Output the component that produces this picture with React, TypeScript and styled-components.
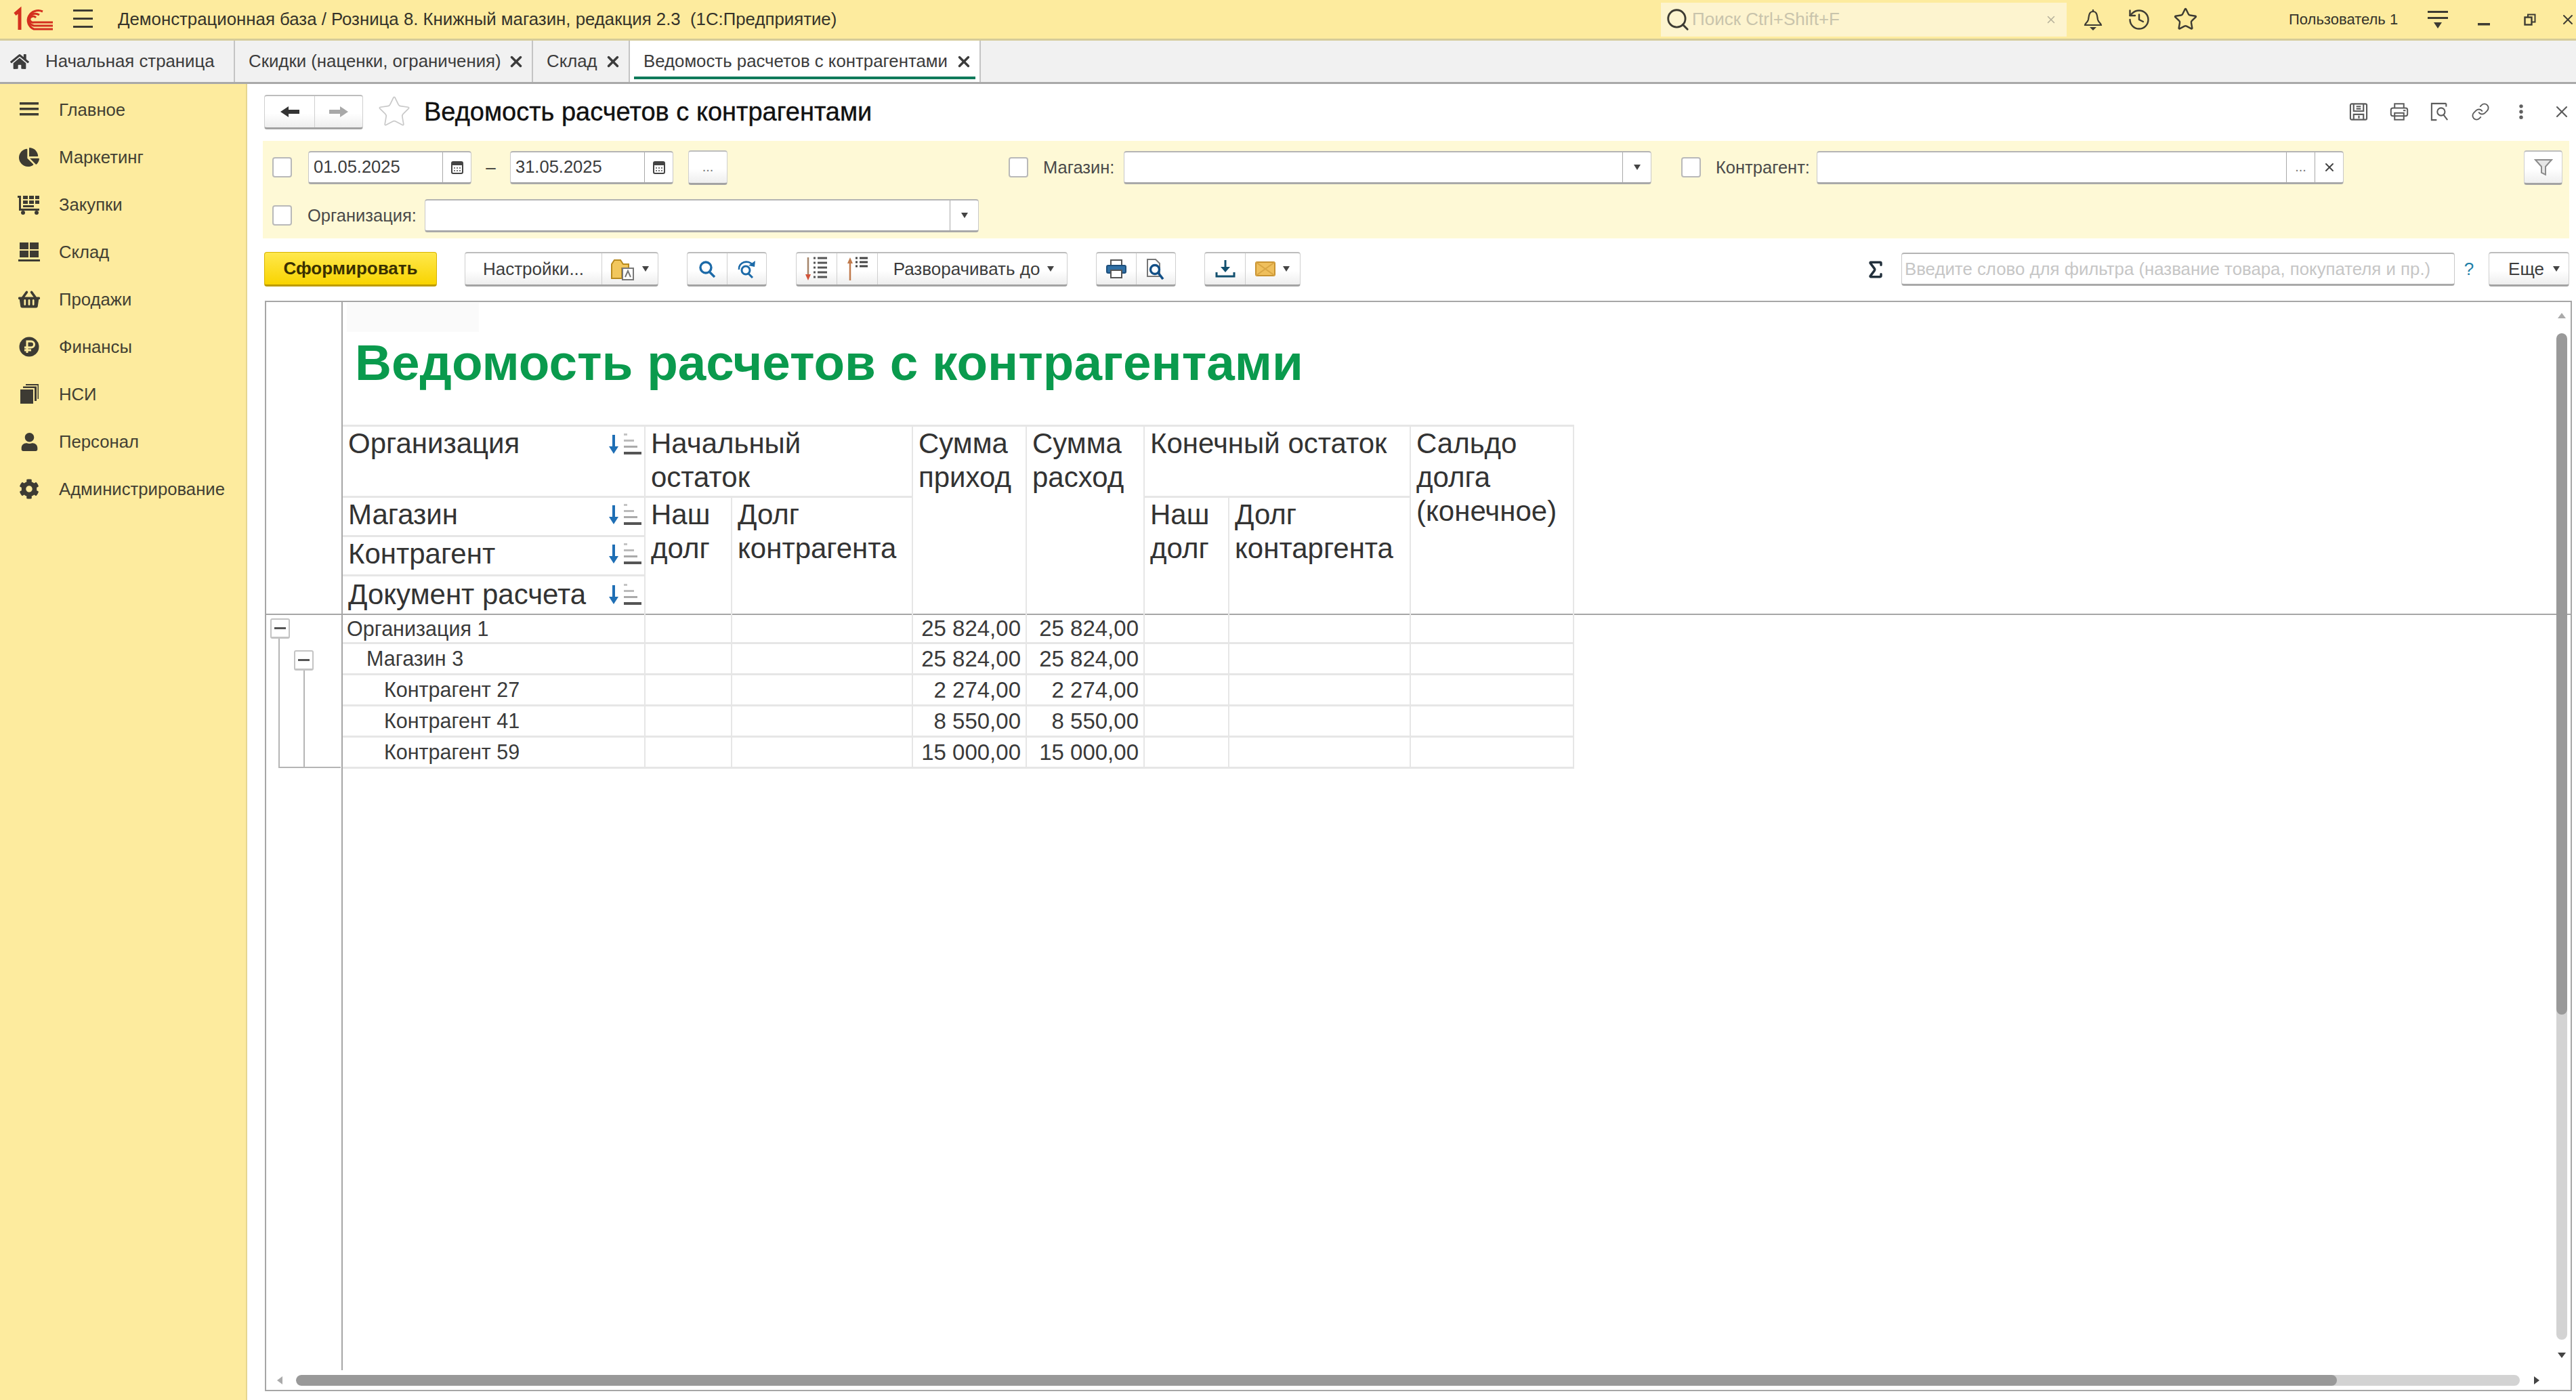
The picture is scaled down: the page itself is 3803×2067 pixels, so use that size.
import React from 'react';
import styled, { createGlobalStyle } from 'styled-components';
import { History, Star, Search, X, Link, EllipsisVertical, Sigma } from 'lucide-react';
import { FaChartPie, FaCog, FaHome, FaShoppingBasket, FaUser } from 'react-icons/fa';

const COLOR_YELLOW = '#fdeb9e';
const COLOR_PANEL = '#fef9d6';
const COLOR_TEXT = '#3a3a36';
const COLOR_ICON = '#3d3b33';
const COLOR_LINE = '#e6e6e6';
const COLOR_FRAME = '#a6a6a6';

const GlobalStyle = createGlobalStyle`
  html, body {
    margin: 0;
    padding: 0;
    background: #fff;
  }
  * {
    box-sizing: border-box;
  }
  body {
    font-family: "Liberation Sans", Arial, sans-serif;
    color: ${COLOR_TEXT};
  }
`;

const Page = styled.div`
  width: 3803px;
  height: 2067px;
  display: flex;
  flex-direction: column;
  overflow: hidden;
`;

/* top bar */
const TopBar = styled.header`
  height: 60px;
  flex: none;
  display: flex;
  align-items: center;
  background: ${COLOR_YELLOW};
  border-bottom: 3px solid #d5cb9a;
`;

const LogoSlot = styled.div`
  display: flex;
  margin-left: 20px;
  width: 88px;
`;

const MenuSlot = styled.div`
  display: flex;
  width: 66px;
`;

const AppTitle = styled.div`
  font-size: 25.8px;
  white-space: pre;
  color: #35332a;
`;

const SearchBox = styled.div`
  margin-left: auto;
  width: 599px;
  height: 50px;
  display: flex;
  align-items: center;
  padding: 0 14px 0 6px;
  background: #fdf4cf;
  font-size: 26px;
  color: #c9c4ac;
`;

const SearchText = styled.span`
  margin-left: 2px;
  flex: 1;
`;

const TopSlot = styled.div<{ $w?: number }>`
  width: ${(p) => p.$w ?? 68}px;
  flex: none;
  display: flex;
  justify-content: center;
  align-items: center;
  color: ${COLOR_ICON};
`;

const TopIcons = styled.div`
  display: flex;
  margin-left: 5px;
`;

const UserName = styled.div`
  width: 186px;
  margin-left: 119px;
  font-size: 22px;
  color: #35332a;
`;

const CloseSlot = styled.div`
  width: 34px;
  padding-left: 10px;
  flex: none;
  display: flex;
  color: ${COLOR_ICON};
`;

/* tabs */
const TabBar = styled.nav`
  height: 64px;
  flex: none;
  display: flex;
  background: #f1f1f1;
  border-bottom: 3px solid #a9a9a9;
`;

const Tab = styled.div<{ $w: number; $active?: boolean }>`
  position: relative;
  width: ${(p) => p.$w}px;
  flex: none;
  display: flex;
  align-items: center;
  justify-content: space-between;
  padding: 0 10px 0 20px;
  font-size: 25.8px;
  white-space: nowrap;
  color: #3c3c3c;
  background: ${(p) => (p.$active ? '#fff' : 'transparent')};
  border-right: 2px solid #c4c4c4;
  ${(p) =>
    p.$active &&
    `&::after {
      content: '';
      position: absolute;
      left: 6px;
      right: 6px;
      bottom: 4px;
      height: 4px;
      background: #0f7a5a;
    }`}
`;

const HomeTab = styled(Tab)`
  justify-content: flex-start;
  gap: 24px;
  padding-left: 15px;
`;

/* body */
const Body = styled.div`
  flex: 1;
  min-height: 0;
  display: flex;
`;

const Sidebar = styled.aside`
  width: 365px;
  flex: none;
  padding-top: 3px;
  background: ${COLOR_YELLOW};
  border-right: 2px solid #e5d690;
`;

const SideItem = styled.div`
  height: 70px;
  display: flex;
  align-items: center;
  font-size: 25.7px;
  color: #423f33;
`;

const SideIcon = styled.div`
  width: 87px;
  flex: none;
  padding-right: 1px;
  display: flex;
  justify-content: center;
  color: ${COLOR_ICON};
`;

const Main = styled.main`
  flex: 1;
  min-width: 0;
  display: flex;
  flex-direction: column;
  padding: 0 10px 13px 25px;
`;

const HeadRow = styled.div`
  height: 84px;
  flex: none;
  display: flex;
  align-items: center;
  padding-bottom: 2px;
`;

const Group = styled.div<{ $w?: number; $ml?: number }>`
  width: ${(p) => (p.$w ? `${p.$w}px` : 'auto')};
  margin-left: ${(p) => p.$ml ?? 0}px;
  height: 51px;
  flex: none;
  display: flex;
  background: linear-gradient(#fff 55%, #eeeeee);
  border: 1px solid #cfcfcf;
  border-top: 2px solid #bdbdbd;
  border-bottom: 3px solid #a3a3a3;
  border-radius: 4px;
`;

const GroupCell = styled.div<{ $w?: number; $pl?: number; $gap?: number }>`
  width: ${(p) => (p.$w ? `${p.$w}px` : 'auto')};
  flex: ${(p) => (p.$w ? 'none' : '1')};
  display: flex;
  align-items: center;
  justify-content: center;
  gap: ${(p) => p.$gap ?? 10}px;
  padding-left: ${(p) => p.$pl ?? 0}px;
  font-size: 26px;
  color: #3c3c3c;
  border-right: 1px solid #cfcfcf;
  &:last-child {
    border-right: 0;
  }
`;

const StarSlot = styled.div`
  margin-left: 20px;
  flex: none;
  display: flex;
  color: #c9c9c9;
`;

const PageTitle = styled.h1`
  margin: 0 0 0 18px;
  font-size: 38px;
  font-weight: 400;
  color: #111;
  -webkit-text-stroke: 0.4px #111;
  white-space: nowrap;
`;

const FormIcons = styled.div`
  margin-left: auto;
  margin-right: -3px;
  display: flex;
  gap: 32px;
  color: #5b5b5b;
`;

const FormIcon = styled.div`
  width: 28px;
  display: flex;
  justify-content: center;
  align-items: center;
`;

/* filter panel */
const FilterPanel = styled.section`
  height: 144px;
  flex: none;
  margin-left: -2px;
  padding: 13px 0 0 14px;
  background: ${COLOR_PANEL};
`;

const FilterRow = styled.div`
  height: 52px;
  display: flex;
  align-items: center;
  & + & {
    margin-top: 19px;
  }
`;

const Check = styled.div<{ $ml?: number }>`
  width: 29px;
  height: 30px;
  flex: none;
  margin-left: ${(p) => p.$ml ?? 0}px;
  background: #fff;
  border: 2px solid #b9b9b9;
  border-radius: 4px;
`;

const FieldLabel = styled.div<{ $w: number; $ml: number }>`
  width: ${(p) => p.$w}px;
  margin-left: ${(p) => p.$ml}px;
  flex: none;
  font-size: 25.5px;
  color: #4a4a4a;
  white-space: nowrap;
`;

const Field = styled.div<{ $w: number; $ml?: number }>`
  width: ${(p) => p.$w}px;
  margin-left: ${(p) => p.$ml ?? 0}px;
  height: 49px;
  flex: none;
  display: flex;
  background: #fff;
  border: 1px solid #c8c8c8;
  border-top: 2px solid #b4b4b4;
  border-bottom: 3px solid #a9a9a9;
  border-radius: 4px;
`;

const FieldValue = styled.div`
  flex: 1;
  padding-left: 7px;
  display: flex;
  align-items: center;
  font-size: 25.5px;
  color: #3c3c3c;
`;

const FieldAddon = styled.div<{ $w?: number }>`
  width: ${(p) => p.$w ?? 42}px;
  flex: none;
  display: flex;
  align-items: center;
  justify-content: center;
  font-size: 20px;
  color: #777;
  border-left: 1px solid #a9a9a9;
`;

const DateDash = styled.div`
  width: 57px;
  flex: none;
  text-align: center;
  font-size: 26px;
`;

const PanelButton = styled(Group)`
  font-size: 20px;
  color: #777;
  align-items: center;
  justify-content: center;
`;

const FilterButton = styled(PanelButton)`
  margin-left: auto;
  margin-right: 10px;
`;

/* report command bar */
const Toolbar = styled.div`
  height: 51px;
  flex: none;
  margin-top: 20px;
  display: flex;
  align-items: center;
`;

const GenerateButton = styled.div`
  width: 255px;
  height: 51px;
  flex: none;
  display: flex;
  align-items: center;
  justify-content: center;
  font-size: 26px;
  font-weight: 700;
  color: #3a3000;
  background: linear-gradient(#ffe84d, #f9d400);
  border: 1px solid #d8b400;
  border-bottom: 3px solid #bd9c00;
  border-radius: 4px;
`;

const SumSlot = styled.div`
  margin-left: auto;
  width: 38px;
  display: flex;
  justify-content: center;
  color: #22303c;
`;

const QuickFilter = styled(Field)`
  height: 49px;
  padding-left: 4px;
  align-items: center;
  font-size: 25.8px;
  color: #c6c6c6;
  white-space: nowrap;
`;

const HelpMark = styled.div`
  width: 50px;
  flex: none;
  padding-right: 8px;
  text-align: center;
  font-size: 26px;
  color: #1e7fa8;
`;

/* report */
const Report = styled.section`
  position: relative;
  flex: 1;
  min-height: 0;
  margin: 21px -4px 0 1px;
  display: grid;
  grid-template-columns: 113px 1fr;
  grid-template-rows: 462px 1fr 29px;
  border: 2px solid ${COLOR_FRAME};
`;

const HeadGutter = styled.div`
  border-right: 2px solid ${COLOR_FRAME};
  border-bottom: 2px solid ${COLOR_FRAME};
`;

const HeadPane = styled.div`
  border-bottom: 2px solid ${COLOR_FRAME};
`;

const EmptyCell = styled.div`
  width: 195px;
  height: 43px;
  margin: 1px 0 0 6px;
  background: #fafafa;
`;

const ReportTitle = styled.div`
  height: 80px;
  margin: 5px 0 52px 18px;
  line-height: 80px;
  font-size: 74.7px;
  font-weight: 700;
  color: #0a9a4d;
  white-space: nowrap;
`;

const GRID_COLUMNS = '447px 128px 267px 168px 174px 125px 268px 241px';

const HeadGrid = styled.div`
  width: 1818px;
  height: 279px;
  display: grid;
  grid-template-columns: ${GRID_COLUMNS};
  grid-template-rows: 105px 58px 58px 58px;
  border-top: 3px solid ${COLOR_LINE};
`;

const HeadCell = styled.div<{ $cols?: number; $rows?: number; $tail?: boolean }>`
  grid-column: span ${(p) => p.$cols ?? 1};
  grid-row: span ${(p) => p.$rows ?? 1};
  padding: 0 0 0 8px;
  font-size: 42px;
  line-height: 50px;
  color: #333;
  border-right: 2px solid ${COLOR_LINE};
  border-bottom: ${(p) => (p.$tail ? '0' : `3px solid ${COLOR_LINE}`)};
  white-space: pre-line;
`;

const KeyCell = styled.div<{ $top?: boolean; $last?: boolean }>`
  display: flex;
  align-items: ${(p) => (p.$top ? 'flex-start' : 'center')};
  justify-content: space-between;
  padding: ${(p) => (p.$top ? '0 3px 0 8px' : '0 3px 5px 8px')};
  font-size: 42px;
  line-height: 50px;
  color: #333;
  white-space: nowrap;
  border-right: 2px solid ${COLOR_LINE};
  border-bottom: ${(p) => (p.$last ? '0' : `3px solid ${COLOR_LINE}`)};
`;

const SortMark = styled.svg<{ $top?: boolean }>`
  flex: none;
  margin-top: ${(p) => (p.$top ? '10px' : '0')};
`;

const Gutter = styled.div`
  display: flex;
  flex-direction: column;
  padding-top: 5px;
  border-right: 2px solid ${COLOR_FRAME};
`;

const Toggle = styled.div`
  width: 29px;
  height: 30px;
  flex: none;
  display: flex;
  align-items: center;
  justify-content: center;
  background: #fff;
  border: 2px solid #c4c4c4;
  border-bottom-width: 3px;
  border-radius: 3px;
  &::before {
    content: '';
    width: 17px;
    height: 3px;
    background: #555;
  }
`;

const RootToggle = styled(Toggle)`
  margin-left: 6px;
`;

const Branch = styled.div`
  width: 92px;
  height: 191px;
  margin-left: 18px;
  padding: 17px 0 0 21px;
  display: flex;
  flex-direction: column;
  border-left: 2px solid #b5b5b5;
  border-bottom: 2px solid #b5b5b5;
`;

const BranchLine = styled.div`
  flex: 1;
  width: 2px;
  margin-left: 14px;
  background: #b5b5b5;
`;

const DataGrid = styled.div`
  width: 1818px;
  align-self: start;
  display: grid;
  grid-template-columns: ${GRID_COLUMNS};
  grid-auto-rows: 46px;
  grid-template-rows: 43px;
`;

const DataCell = styled.div<{ $indent?: number; $num?: boolean }>`
  display: flex;
  align-items: center;
  justify-content: ${(p) => (p.$num ? 'flex-end' : 'flex-start')};
  padding: ${(p) => (p.$num ? '0 7px 0 0' : `0 0 0 ${p.$indent ?? 0}px`)};
  font-size: ${(p) => (p.$num ? 33 : 30.5)}px;
  color: #3a3a3a;
  white-space: nowrap;
  border-right: 2px solid ${COLOR_LINE};
  border-bottom: 3px solid ${COLOR_LINE};
`;

const HScroll = styled.div`
  grid-column: 1 / 3;
  display: flex;
  align-items: center;
  padding: 0 44px 0 14px;
`;

const ScrollArrow = styled.svg`
  flex: none;
`;

const ScrollTrack = styled.div`
  flex: 1;
  height: 16px;
  margin: 0 19px 0 18px;
  background: #d3d3d3;
  border-radius: 8px;
  overflow: hidden;
`;

const ScrollThumb = styled.div`
  height: 100%;
  background: #999;
  border-radius: 8px;
`;

const VScroll = styled.div`
  position: absolute;
  top: 14px;
  right: 5px;
  bottom: 45px;
  width: 16px;
  display: flex;
  flex-direction: column;
  align-items: center;
`;

const VTrack = styled.div`
  flex: 1;
  width: 16px;
  margin: 20px 0 17px;
  background: #d3d3d3;
  border-radius: 8px;
  overflow: hidden;
`;

const VThumb = styled.div`
  width: 100%;
  background: #999;
  border-radius: 8px;
`;

/* drawings */
const Logo = () => (
  <svg width="60" height="44" viewBox="0 0 60 44" fill="none" stroke="#d4301f" strokeWidth="3">
    <path d="M2 14 L9 8 V37" strokeWidth="5" />
    <path d="M43 10 A15 14 0 1 0 30 36 H58" />
    <path d="M38 15 A10 9 0 1 0 30 31 H58" />
    <path d="M33 19 A5 4.5 0 1 0 30 26 H58" />
  </svg>
);

const Lines = ({ w = 36, h = 36, gap = 11, bar = 3 }: { w?: number; h?: number; gap?: number; bar?: number }) => (
  <svg width={w} height={h} viewBox={`0 0 ${w} ${h}`} fill="#3d3b33">
    {[0, 1, 2].map((i) => (
      <rect key={i} x="0" y={3 + i * gap} width={w} height={bar} />
    ))}
  </svg>
);

const MenuDown = () => (
  <svg width="30" height="28" viewBox="0 0 30 28" fill="#3d3b33">
    <rect y="1" width="30" height="3" />
    <rect y="10" width="30" height="3" />
    <path d="M9 18 H21 L15 27 Z" />
  </svg>
);

const Restore = () => (
  <svg width="18" height="18" viewBox="0 0 18 18" fill="none" stroke="#3d3b33" strokeWidth="2.4">
    <rect x="1.5" y="5.5" width="10" height="11" />
    <path d="M6 5 V1.5 H16.5 V12.5 H12" strokeWidth="2" />
  </svg>
);

const Minimize = () => (
  <svg width="20" height="20" viewBox="0 0 20 20" fill="#3d3b33">
    <rect x="1" y="15" width="18" height="3.5" />
  </svg>
);

const BellDown = () => (
  <svg width="30" height="32" viewBox="0 0 30 32" fill="none" stroke="#3d3b33" strokeWidth="2.2">
    <path d="M15 1 V4 M15 4 C9 4 9 10 8 16 C7 20 3 22 3 24 H27 C27 22 23 20 22 16 C21 10 21 4 15 4 Z" />
    <path d="M10 27 H20 L15 32 Z" fill="#3d3b33" stroke="none" />
  </svg>
);

const PieIcon = () => <FaChartPie size={30} />;

const CartIcon = () => (
  <svg width="34" height="30" viewBox="0 0 34 30" fill="#3d3b33">
    <path d="M0 2 H5 V21 H32 V24 H2 V5 H0 Z" />
    <rect x="8" y="2" width="7" height="5" />
    <rect x="17" y="2" width="7" height="5" />
    <rect x="26" y="2" width="6" height="5" />
    <rect x="8" y="9" width="7" height="5" />
    <rect x="17" y="9" width="7" height="5" />
    <rect x="26" y="9" width="6" height="5" />
    <rect x="8" y="16" width="16" height="3" />
    <circle cx="8" cy="27" r="3" />
    <circle cx="28" cy="27" r="3" />
  </svg>
);

const WarehouseIcon = () => (
  <svg width="32" height="30" viewBox="0 0 32 30" fill="#3d3b33">
    <rect x="2" y="1" width="13" height="10" />
    <rect x="17" y="1" width="13" height="10" />
    <rect x="2" y="13" width="13" height="10" />
    <rect x="17" y="13" width="13" height="10" />
    <rect x="0" y="26" width="32" height="3" />
  </svg>
);

const RubleIcon = () => (
  <svg width="30" height="30" viewBox="0 0 30 30">
    <circle cx="15" cy="15" r="14.5" fill="#3d3b33" />
    <path d="M12 24 V7 H18 A4.5 4.5 0 0 1 18 16 H8 M8 20 H18" fill="none" stroke={COLOR_YELLOW} strokeWidth="3" />
  </svg>
);

const StackIcon = () => (
  <svg width="28" height="30" viewBox="0 0 28 30" fill="#3d3b33">
    <rect x="1" y="8" width="19" height="21" />
    <path d="M5 6 V3.5 H25 V25 H22 V6 Z" />
    <path d="M9 2 V0 H28 V22 H26.5 V2 Z" />
  </svg>
);

const SortGlyph = ({ top }: { top?: boolean }) => (
  <SortMark $top={top} width="50" height="32" viewBox="0 0 50 32">
    <path d="M6 2 H10 V19 H15 L8 30 L1 19 H6 Z" fill="#1f6fb5" />
    <rect x="23" y="0" width="5" height="3" fill="#c4c4c4" />
    <rect x="23" y="9" width="15" height="3" fill="#bbb" />
    <rect x="23" y="18" width="20" height="3" fill="#aaa" />
    <rect x="23" y="27" width="26" height="4" fill="#555" />
  </SortMark>
);

const Calendar = () => (
  <svg width="18" height="20" viewBox="0 0 18 20">
    <rect x="1" y="2" width="16" height="17" rx="2" fill="#fff" stroke="#444" strokeWidth="2" />
    <rect x="1" y="2" width="16" height="5" fill="#444" />
    <path d="M4 11 H14 M4 15 H14" stroke="#777" strokeWidth="2" strokeDasharray="2 2" />
  </svg>
);

const Caret = () => (
  <svg width="12" height="10" viewBox="0 0 12 10">
    <path d="M1 1 H11 L6 9 Z" fill="#444" />
  </svg>
);

const NavArrow = ({ dir, color }: { dir: 'left' | 'right'; color: string }) => (
  <svg width="30" height="18" viewBox="0 0 30 18" style={dir === 'right' ? { transform: 'scaleX(-1)' } : undefined}>
    <path d="M1 9 L13 1 V6 H29 V12 H13 V17 Z" fill={color} />
  </svg>
);

const Funnel = () => (
  <svg width="28" height="26" viewBox="0 0 28 26" fill="#e6e6e6" stroke="#8c8c8c" strokeWidth="2">
    <path d="M2 2 H26 L17 12 V24 L11 21 V12 Z" />
  </svg>
);

const FolderDoc = () => (
  <svg width="36" height="33" viewBox="0 0 36 33">
    <path d="M2 9 L6 3 H15 L19 9 H27 V15 H17 V30 H2 Z" fill="#f2c75c" stroke="#b88a1e" strokeWidth="2" />
    <rect x="18" y="15" width="16" height="17" fill="#fff" stroke="#777" strokeWidth="2" />
    <path d="M22 28 L26 19 L30 28" fill="none" stroke="#777" strokeWidth="2" />
  </svg>
);

const Magnifier = () => (
  <svg width="26" height="25" viewBox="0 0 26 25" fill="none" stroke="#1c6aa8" strokeWidth="3.4">
    <circle cx="11" cy="10" r="8" />
    <path d="M16 16 L24 24" />
  </svg>
);

const MagnifierCycle = () => (
  <svg width="28" height="27" viewBox="0 0 28 27" fill="none" stroke="#1c6aa8" strokeWidth="2.6">
    <path d="M3 14 A11 10 0 0 1 23 7" />
    <path d="M27 1 L26 10 L17 8 Z" fill="#1c6aa8" stroke="none" />
    <circle cx="13" cy="15" r="6" strokeWidth="3" />
    <path d="M17 20 L23 26" strokeWidth="3" />
  </svg>
);

const ListDown = () => (
  <svg width="34" height="36" viewBox="0 0 34 36">
    <path d="M4 1 V28" stroke="#a5856a" strokeWidth="2.5" />
    <path d="M0 26 H8 L4 35 Z" fill="#d2543a" />
    {[2, 9, 16, 23, 30].map((y) => (
      <path key={y} d="M12 0 H15 M18 0 H32" transform={`translate(0 ${y})`} stroke="#555" strokeWidth="3" />
    ))}
  </svg>
);

const ListUp = () => (
  <svg width="30" height="36" viewBox="0 0 30 36">
    <path d="M4 8 V35" stroke="#c07a4c" strokeWidth="2.5" />
    <path d="M0 10 H8 L4 1 Z" fill="#c07a4c" />
    {[2, 8, 14].map((y) => (
      <path key={y} d="M12 0 H15 M18 0 H30" transform={`translate(0 ${y})`} stroke="#444" strokeWidth="3" />
    ))}
  </svg>
);

const PrintBlue = () => (
  <svg width="30" height="28" viewBox="0 0 30 28" fill="none" stroke="#555" strokeWidth="2">
    <path d="M7 9 V1 H23 V9" />
    <rect x="1" y="9" width="28" height="11" rx="2" fill="#2f6fa5" stroke="#1d4f7c" />
    <rect x="7" y="16" width="16" height="11" fill="#fff" />
  </svg>
);

const PreviewBlue = () => (
  <svg width="28" height="31" viewBox="0 0 28 31" fill="none">
    <path d="M2 1 H14 L20 7 V26 H2 Z" fill="#fff" stroke="#777" strokeWidth="2" />
    <circle cx="13" cy="16" r="6.5" stroke="#124f86" strokeWidth="3.4" />
    <path d="M18 21 L25 30" stroke="#124f86" strokeWidth="3.6" />
  </svg>
);

const DownloadIcon = () => (
  <svg width="30" height="26" viewBox="0 0 30 26" fill="none" stroke="#12506f" strokeWidth="3">
    <path d="M15 0 V12" />
    <path d="M8 10 H22 L15 18 Z" fill="#12506f" stroke="none" />
    <path d="M2 18 V24 H28 V18" />
  </svg>
);

const MailIcon = () => (
  <svg width="30" height="22" viewBox="0 0 30 22" fill="none">
    <rect x="1" y="1" width="28" height="20" rx="2" fill="#efbf5c" stroke="#c89332" strokeWidth="2" />
    <path d="M1 1 L29 21 M29 1 L1 21" stroke="#d9a644" strokeWidth="2" />
  </svg>
);

const SaveIcon = () => (
  <svg width="29" height="28" viewBox="0 0 29 28" fill="none" stroke="#5b5b5b" strokeWidth="2.2">
    <rect x="2" y="2" width="25" height="24" rx="2" />
    <path d="M7 2 V13 H22 V2 M11 6 H18 M11 9.5 H18" />
    <path d="M7 26 V18 H22 V26 M15 20 V24" />
  </svg>
);

const PrintIcon = () => (
  <svg width="31" height="30" viewBox="0 0 31 30" fill="none" stroke="#5b5b5b" strokeWidth="2.2">
    <path d="M8 9 V2 H23 V9" />
    <rect x="2" y="9" width="27" height="13" rx="3" />
    <rect x="8" y="17" width="15" height="11" />
    <path d="M22 13 H26" />
  </svg>
);

const PreviewIcon = () => (
  <svg width="30" height="30" viewBox="0 0 30 30" fill="none" stroke="#5b5b5b" strokeWidth="2.2">
    <path d="M25 2 H2 V28 H10 M25 2 V7" />
    <circle cx="17" cy="15" r="6" />
    <path d="M21 20 L27 28" />
  </svg>
);

const navItems: [string, React.ReactNode][] = [
  ['Главное', <Lines key="m" w={28} h={28} gap={8} bar={3.5} />],
  ['Маркетинг', <PieIcon key="p" />],
  ['Закупки', <CartIcon key="c" />],
  ['Склад', <WarehouseIcon key="w" />],
  ['Продажи', <FaShoppingBasket key="b" size={32} />],
  ['Финансы', <RubleIcon key="r" />],
  ['НСИ', <StackIcon key="s" />],
  ['Персонал', <FaUser key="u" size={27} />],
  ['Администрирование', <FaCog key="g" size={30} />],
];

const rows = [
  { name: 'Организация 1', indent: 6, sum: '25 824,00' },
  { name: 'Магазин 3', indent: 35, sum: '25 824,00' },
  { name: 'Контрагент 27', indent: 61, sum: '2 274,00' },
  { name: 'Контрагент 41', indent: 61, sum: '8 550,00' },
  { name: 'Контрагент 59', indent: 61, sum: '15 000,00' },
];

const TabClose = () => <X size={26} strokeWidth={3.2} />;

export default function App() {
  return (
    <Page>
      <GlobalStyle />
      <TopBar>
        <LogoSlot><Logo /></LogoSlot>
        <MenuSlot><Lines w={29} gap={12} /></MenuSlot>
        <AppTitle>Демонстрационная база / Розница 8. Книжный магазин, редакция 2.3  (1С:Предприятие)</AppTitle>
        <SearchBox>
          <Search size={38} color="#3d3b33" strokeWidth={1.8} />
          <SearchText>Поиск Ctrl+Shift+F</SearchText>
          <X size={18} color="#b5b09a" />
        </SearchBox>
        <TopIcons>
          <TopSlot><BellDown /></TopSlot>
          <TopSlot><History size={36} strokeWidth={1.6} /></TopSlot>
          <TopSlot><Star size={37} strokeWidth={1.6} /></TopSlot>
        </TopIcons>
        <UserName>Пользователь 1</UserName>
        <TopSlot><MenuDown /></TopSlot>
        <TopSlot><Minimize /></TopSlot>
        <TopSlot><Restore /></TopSlot>
        <CloseSlot><X size={30} strokeWidth={2} /></CloseSlot>
      </TopBar>

      <TabBar>
        <HomeTab $w={347}><FaHome size={28} color="#3d3d3d" />Начальная страница</HomeTab>
        <Tab $w={440}>Скидки (наценки, ограничения)<TabClose /></Tab>
        <Tab $w={143}>Склад<TabClose /></Tab>
        <Tab $w={518} $active>Ведомость расчетов с контрагентами<TabClose /></Tab>
      </TabBar>

      <Body>
        <Sidebar>
          {navItems.map(([label, icon]) => (
            <SideItem key={label}>
              <SideIcon>{icon}</SideIcon>
              {label}
            </SideItem>
          ))}
        </Sidebar>

        <Main>
          <HeadRow>
            <Group $w={146}>
              <GroupCell $w={74}><NavArrow dir="left" color="#333" /></GroupCell>
              <GroupCell><NavArrow dir="right" color="#a8a8a8" /></GroupCell>
            </Group>
            <StarSlot><Star size={52} strokeWidth={0.8} /></StarSlot>
            <PageTitle>Ведомость расчетов с контрагентами</PageTitle>
            <FormIcons>
              <FormIcon><SaveIcon /></FormIcon>
              <FormIcon><PrintIcon /></FormIcon>
              <FormIcon><PreviewIcon /></FormIcon>
              <FormIcon><Link size={34} strokeWidth={1.6} /></FormIcon>
              <FormIcon><EllipsisVertical size={32} strokeWidth={2.6} /></FormIcon>
              <FormIcon><X size={28} strokeWidth={1.8} /></FormIcon>
            </FormIcons>
          </HeadRow>

          <FilterPanel>
            <FilterRow>
              <Check />
              <Field $w={241} $ml={24}>
                <FieldValue>01.05.2025</FieldValue>
                <FieldAddon><Calendar /></FieldAddon>
              </Field>
              <DateDash>–</DateDash>
              <Field $w={241}>
                <FieldValue>31.05.2025</FieldValue>
                <FieldAddon><Calendar /></FieldAddon>
              </Field>
              <PanelButton $w={58} $ml={22}>...</PanelButton>
              <Check $ml={415} />
              <FieldLabel $w={119} $ml={22}>Магазин:</FieldLabel>
              <Field $w={779}>
                <FieldValue />
                <FieldAddon><Caret /></FieldAddon>
              </Field>
              <Check $ml={44} />
              <FieldLabel $w={149} $ml={22}>Контрагент:</FieldLabel>
              <Field $w={778}>
                <FieldValue />
                <FieldAddon>...</FieldAddon>
                <FieldAddon><X size={20} color="#444" strokeWidth={2.4} /></FieldAddon>
              </Field>
              <FilterButton $w={57}><Funnel /></FilterButton>
            </FilterRow>
            <FilterRow>
              <Check />
              <FieldLabel $w={173} $ml={23}>Организация:</FieldLabel>
              <Field $w={818}>
                <FieldValue />
                <FieldAddon><Caret /></FieldAddon>
              </Field>
            </FilterRow>
          </FilterPanel>

          <Toolbar>
            <GenerateButton>Сформировать</GenerateButton>
            <Group $w={286} $ml={41}>
              <GroupCell>Настройки...</GroupCell>
              <GroupCell $w={82}><FolderDoc /><Caret /></GroupCell>
            </Group>
            <Group $w={118} $ml={42}>
              <GroupCell><Magnifier /></GroupCell>
              <GroupCell><MagnifierCycle /></GroupCell>
            </Group>
            <Group $w={401} $ml={43}>
              <GroupCell $w={60}><ListDown /></GroupCell>
              <GroupCell $w={60}><ListUp /></GroupCell>
              <GroupCell $pl={5}>Разворачивать до<Caret /></GroupCell>
            </Group>
            <Group $w={118} $ml={42}>
              <GroupCell><PrintBlue /></GroupCell>
              <GroupCell><PreviewBlue /></GroupCell>
            </Group>
            <Group $w={142} $ml={42}>
              <GroupCell $w={60}><DownloadIcon /></GroupCell>
              <GroupCell><MailIcon /><Caret /></GroupCell>
            </Group>
            <SumSlot><Sigma size={32} strokeWidth={2.6} /></SumSlot>
            <QuickFilter $w={817} $ml={19}>Введите слово для фильтра (название товара, покупателя и пр.)</QuickFilter>
            <HelpMark>?</HelpMark>
            <Group $w={119}>
              <GroupCell $pl={16} $gap={12}>Еще<Caret /></GroupCell>
            </Group>
          </Toolbar>

          <Report>
            <HeadGutter />
            <HeadPane>
              <EmptyCell />
              <ReportTitle>Ведомость расчетов с контрагентами</ReportTitle>
              <HeadGrid>
                <KeyCell $top>Организация<SortGlyph top /></KeyCell>
                <HeadCell $cols={2}>{'Начальный\nостаток'}</HeadCell>
                <HeadCell $rows={4} $tail>{'Сумма\nприход'}</HeadCell>
                <HeadCell $rows={4} $tail>{'Сумма\nрасход'}</HeadCell>
                <HeadCell $cols={2}>Конечный остаток</HeadCell>
                <HeadCell $rows={4} $tail>{'Сальдо\nдолга\n(конечное)'}</HeadCell>
                <KeyCell>Магазин<SortGlyph /></KeyCell>
                <HeadCell $rows={3} $tail>{'Наш\nдолг'}</HeadCell>
                <HeadCell $rows={3} $tail>{'Долг\nконтрагента'}</HeadCell>
                <HeadCell $rows={3} $tail>{'Наш\nдолг'}</HeadCell>
                <HeadCell $rows={3} $tail>{'Долг\nконтаргента'}</HeadCell>
                <KeyCell>Контрагент<SortGlyph /></KeyCell>
                <KeyCell $last>Документ расчета<SortGlyph /></KeyCell>
              </HeadGrid>
            </HeadPane>

            <Gutter>
              <RootToggle />
              <Branch>
                <Toggle />
                <BranchLine />
              </Branch>
            </Gutter>
            <DataGrid>
              {rows.map((row) => (
                <React.Fragment key={row.name}>
                  <DataCell $indent={row.indent}>{row.name}</DataCell>
                  <DataCell />
                  <DataCell />
                  <DataCell $num>{row.sum}</DataCell>
                  <DataCell $num>{row.sum}</DataCell>
                  <DataCell />
                  <DataCell />
                  <DataCell />
                </React.Fragment>
              ))}
            </DataGrid>

            <HScroll>
              <ScrollArrow width="12" height="14" viewBox="0 0 12 14"><path d="M10 1 V13 L2 7 Z" fill="#aaa" /></ScrollArrow>
              <ScrollTrack><ScrollThumb style={{ width: `${(3014 / 3284) * 100}%` }} /></ScrollTrack>
              <ScrollArrow width="12" height="14" viewBox="0 0 12 14"><path d="M2 1 V13 L10 7 Z" fill="#444" /></ScrollArrow>
            </HScroll>

            <VScroll>
              <ScrollArrow width="14" height="12" viewBox="0 0 14 12"><path d="M1 10 H13 L7 2 Z" fill="#aaa" /></ScrollArrow>
              <VTrack><VThumb style={{ height: `${(1006 / 1486) * 100}%` }} /></VTrack>
              <ScrollArrow width="14" height="12" viewBox="0 0 14 12"><path d="M1 2 H13 L7 10 Z" fill="#444" /></ScrollArrow>
            </VScroll>
          </Report>
        </Main>
      </Body>
    </Page>
  );
}
